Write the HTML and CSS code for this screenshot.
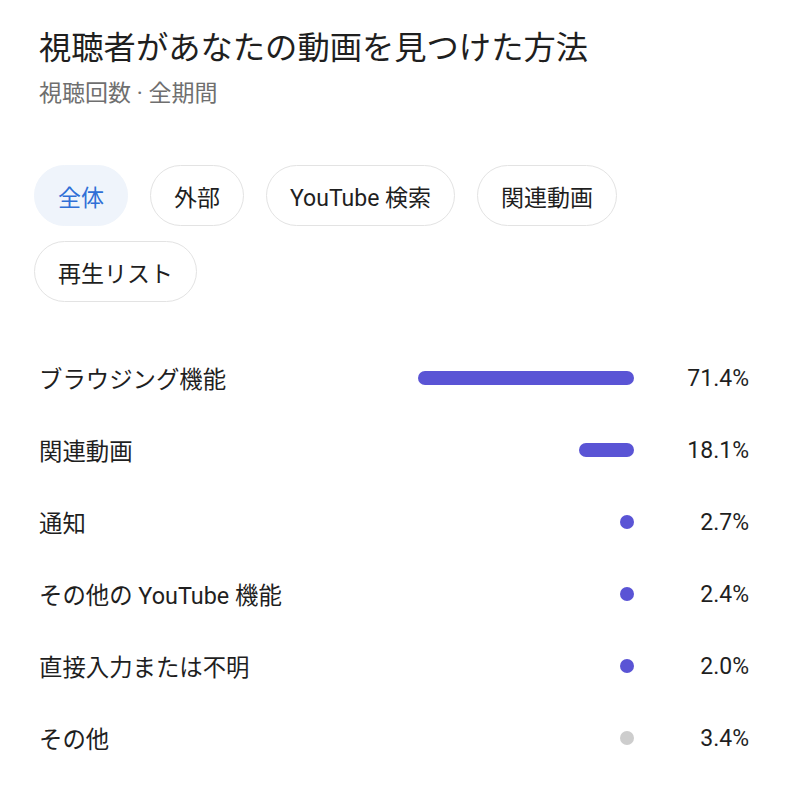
FILE: index.html
```html
<!DOCTYPE html>
<html lang="ja">
<head>
    <meta charset="UTF-8">
    <meta name="viewport" content="width=device-width, initial-scale=1.0">
    <title>トラフィック ソース</title>
    <link rel="stylesheet" href="styles.css">
</head>
<body>

    <div class="card">
        <div class="card-header">
            <h2>視聴者があなたの動画を見つけた方法</h2>
            <p class="subtitle">視聴回数 · 全期間</p>
        </div>

        <!-- Filter chips -->
        <div class="chips">
            <button class="chip active">全体</button>
            <button class="chip">外部</button>
            <button class="chip">YouTube 検索</button>
            <button class="chip">関連動画</button>
            <button class="chip">再生リスト</button>
        </div>

        <!-- Source rows -->
        <div class="sources">
            <div class="source-row">
                <span class="source-name">ブラウジング機能</span>
                <div class="track"><div class="bar" style="width: 216px"></div></div>
                <span class="source-pct">71.4%</span>
            </div>
            <div class="source-row">
                <span class="source-name">関連動画</span>
                <div class="track"><div class="bar" style="width: 55px"></div></div>
                <span class="source-pct">18.1%</span>
            </div>
            <div class="source-row">
                <span class="source-name">通知</span>
                <div class="track"><div class="bar" style="width: 14px"></div></div>
                <span class="source-pct">2.7%</span>
            </div>
            <div class="source-row">
                <span class="source-name">その他の YouTube 機能</span>
                <div class="track"><div class="bar" style="width: 14px"></div></div>
                <span class="source-pct">2.4%</span>
            </div>
            <div class="source-row">
                <span class="source-name">直接入力または不明</span>
                <div class="track"><div class="bar" style="width: 14px"></div></div>
                <span class="source-pct">2.0%</span>
            </div>
            <div class="source-row">
                <span class="source-name">その他</span>
                <div class="track"><div class="bar other" style="width: 14px"></div></div>
                <span class="source-pct">3.4%</span>
            </div>
        </div>
    </div>

</body>
</html>
```

FILE: styles.css
```css
body {
    margin: 0;
    background-color: white;
    color: #1f1f1f;
    font-family: Roboto, "Noto Sans CJK JP", sans-serif;
}

.card {
    padding: 28px 40px 0 39px;
}

.card-header h2 {
    margin: 0;
    font-size: 32.3px;
    font-weight: 400;
    line-height: 40px;
    color: #1f1f1f;
}

.subtitle {
    margin: 11px 0 0 0;
    font-size: 23px;
    line-height: 30px;
    color: #6f6f6f;
}

/* Chips */
.chips {
    display: flex;
    flex-wrap: wrap;
    gap: 15px 22px;
    margin: 56px 0 0 -5px;
}

.chip {
    box-sizing: border-box;
    height: 61px;
    padding: 0 23px;
    font-family: inherit;
    font-size: 23px;
    color: #1f1f1f;
    background-color: white;
    border: 1.5px solid #e3e3e3;
    border-radius: 31px;
}

.chip.active {
    background-color: #eff4fb;
    border-color: #eff4fb;
    color: #2f6fd6;
}

/* Rows */
.sources {
    margin-top: 40px;
}

.source-row {
    display: grid;
    grid-template-columns: 1fr 302px 115px;
    align-items: center;
    height: 72px;
}

.source-name {
    font-size: 23.4px;
    color: #1f1f1f;
}

.track {
    display: flex;
    justify-content: flex-end;
}

.bar {
    height: 14px;
    border-radius: 7px;
    background-color: #5a54d5;
}

.bar.other {
    background-color: #cdcdcd;
}

.source-pct {
    text-align: right;
    font-size: 23px;
    color: #1f1f1f;
}
```
